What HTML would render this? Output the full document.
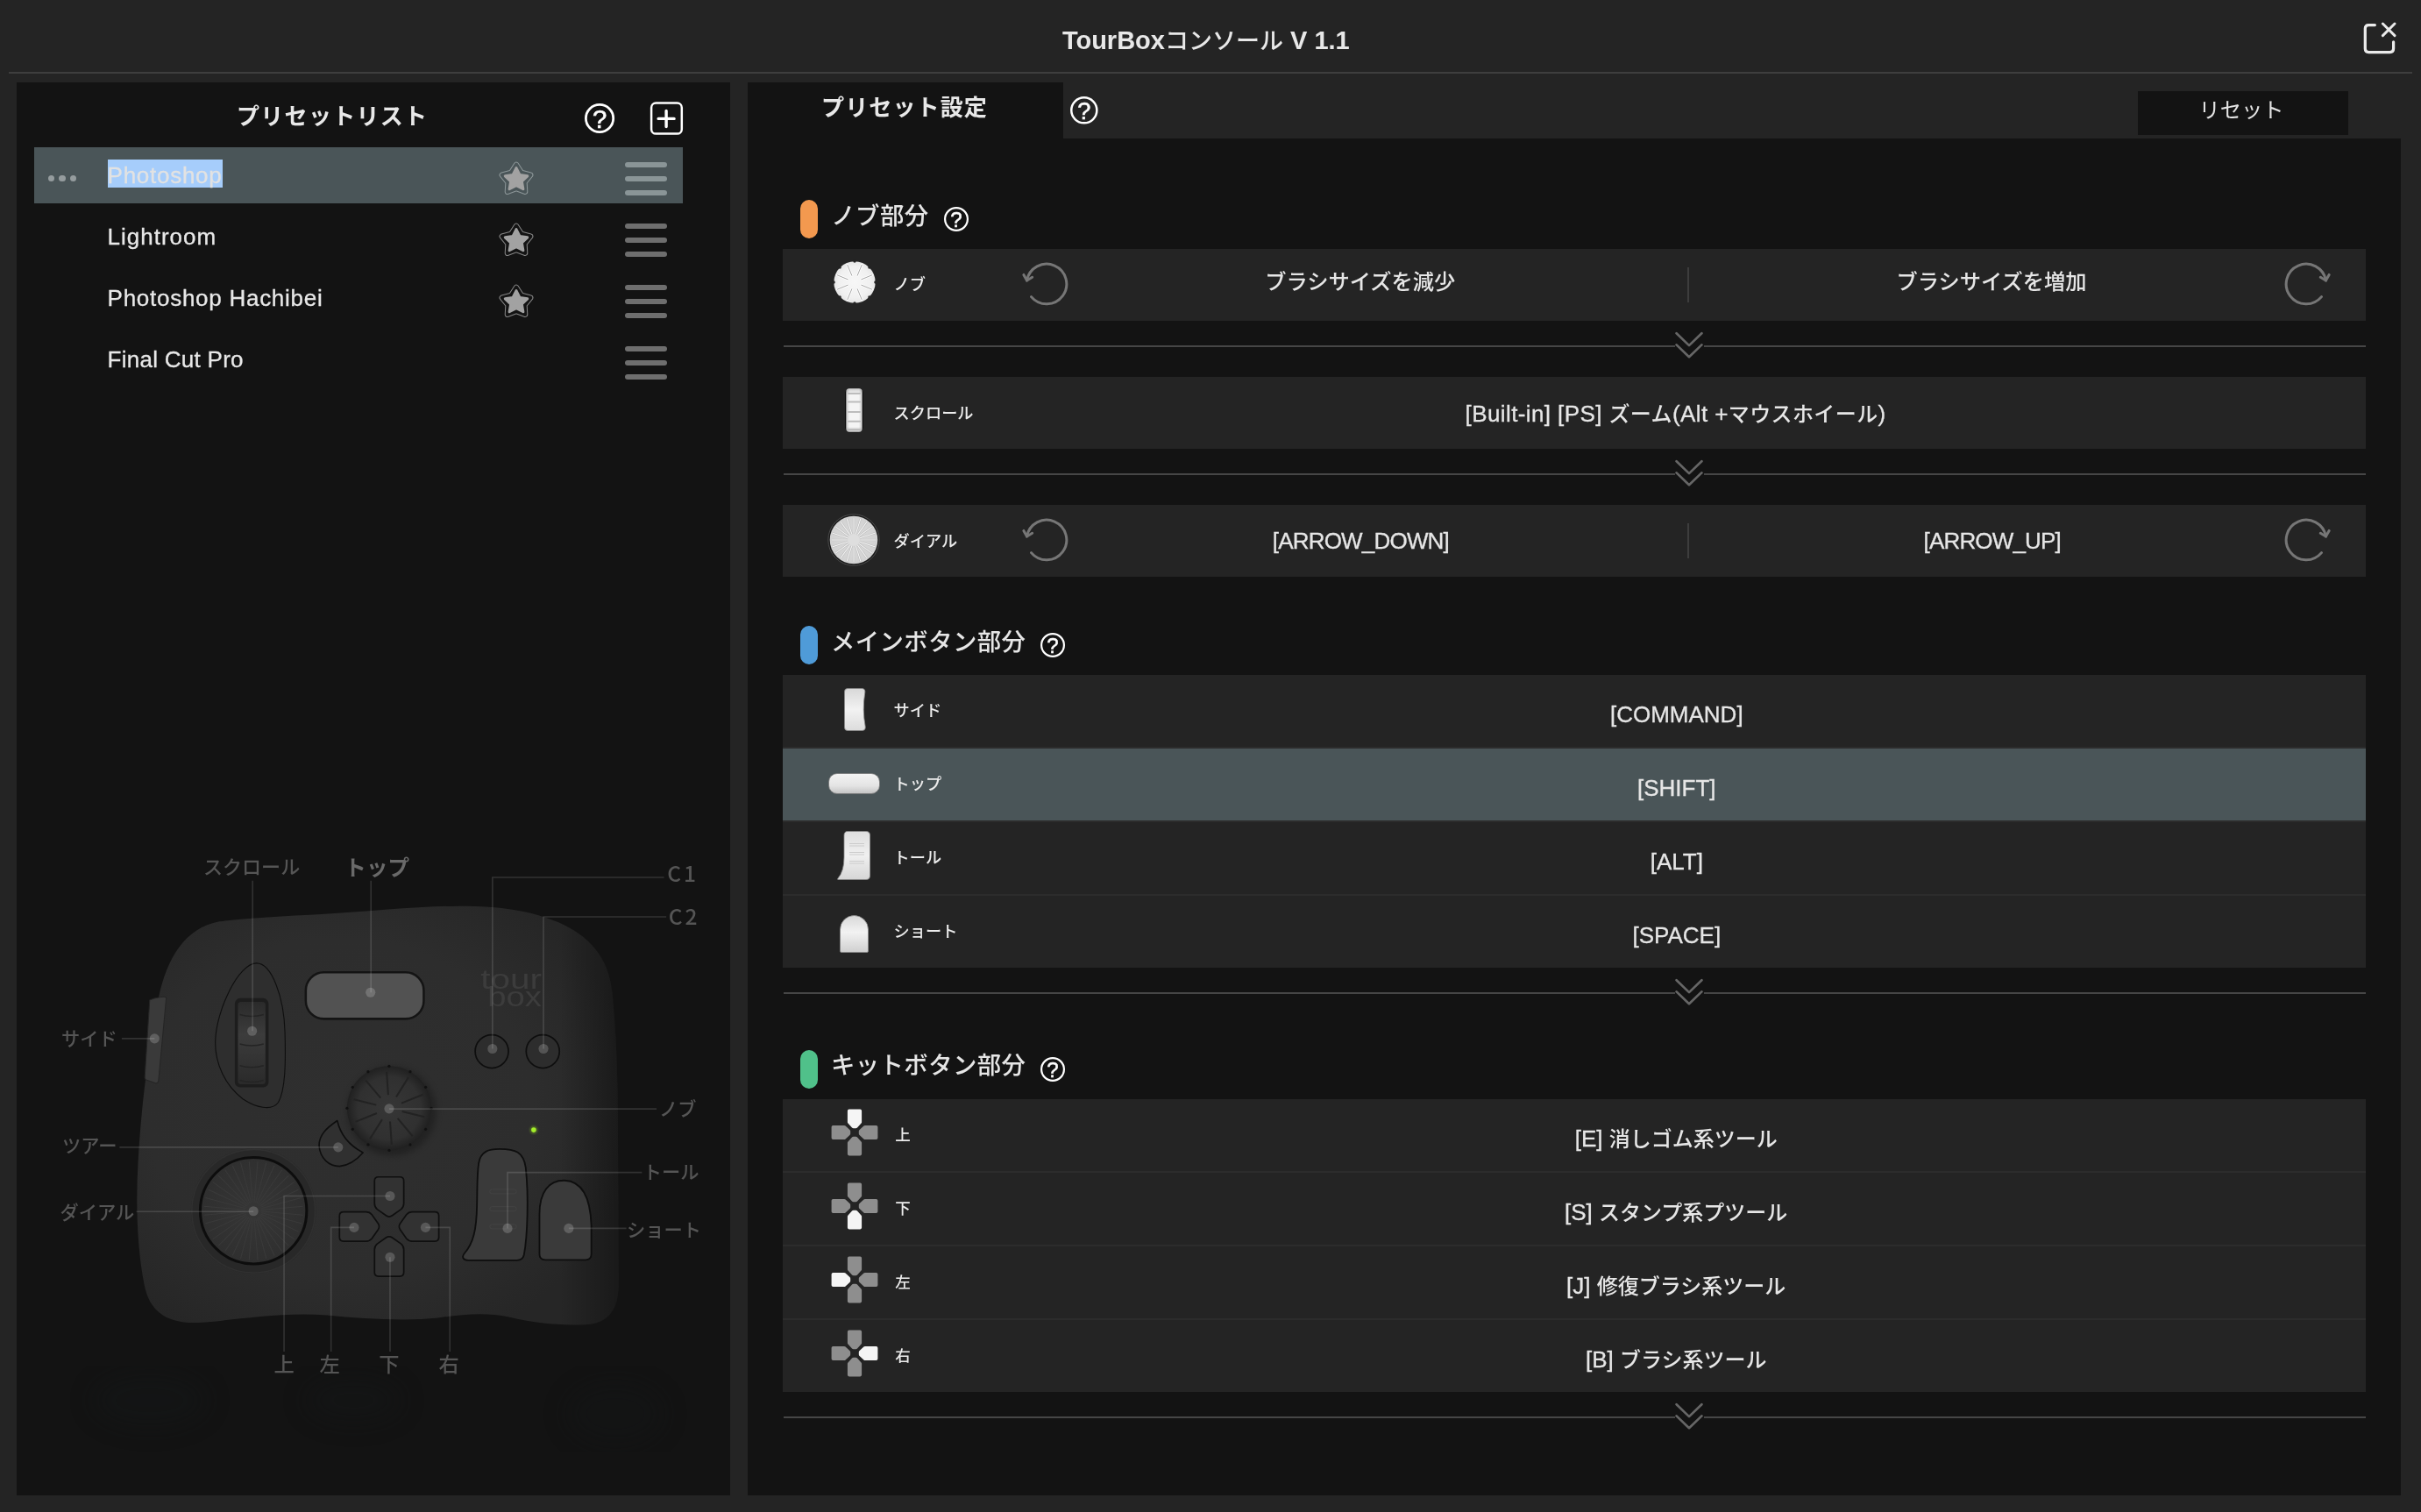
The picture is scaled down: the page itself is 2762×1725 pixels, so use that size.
<!DOCTYPE html>
<html lang="ja"><head><meta charset="utf-8"><title>TourBox Console</title><style>
*{margin:0;padding:0;box-sizing:border-box}
html,body{width:2762px;height:1725px;overflow:hidden;background:#242424}
body{position:relative;font-family:"Liberation Sans","Noto Sans CJK JP",sans-serif;color:#e6e6e6;-webkit-font-smoothing:antialiased}
.a{position:absolute}
.t{position:absolute;white-space:nowrap;line-height:1}
.t,.lab,.val,.sec{opacity:.999}
.c{transform:translateX(-50%)}
.j{font-weight:500;font-family:"Noto Sans CJK JP","Liberation Sans",sans-serif}
.panel{position:absolute;background:#131313}
.row{position:absolute;left:893px;width:1806px;height:82px;background:#242424}
.sep{position:absolute;left:893px;width:1806px;height:2px;background:#2c2c2c}
.sel{background:#4a5558}
.hl{position:absolute;left:894px;width:1805px;height:2px;background:#3b3b3b}
.lab{font-weight:500;position:absolute;white-space:nowrap;line-height:1;font-size:17.5px;color:#ececec;font-family:"Noto Sans CJK JP","Liberation Sans",sans-serif}
.val{position:absolute;white-space:nowrap;line-height:1;font-size:26px;color:#e6e6e6;transform:translateX(-50%)}
.val,.nm{-webkit-text-stroke:.3px currentColor}
.val .j{font-size:24px;-webkit-text-stroke:0 transparent}
.val.j{-webkit-text-stroke:0 transparent}
.sec{font-weight:500;position:absolute;white-space:nowrap;line-height:1;font-size:27px;color:#e6e6e6;font-family:"Noto Sans CJK JP","Liberation Sans",sans-serif}
.pill{position:absolute;left:913px;width:20px;height:44px;border-radius:10px}
svg{position:absolute;overflow:visible;opacity:.999}
</style></head><body>
<div class="t c" id="title" style="left:1375.8px;top:30.6px;font-size:29px;font-weight:bold;color:#e8e8e8">TourBox<span class="j" style="font-size:27px">コンソール</span> V 1.1</div>
<div class="a" style="left:10px;top:81.8px;width:2742px;height:2.4px;background:#3e3e3e"></div>
<svg style="left:2690px;top:20px" width="50" height="48" viewBox="2690 20 50 48" fill="none" stroke="#ebebeb" stroke-linecap="round" stroke-linejoin="round"><path stroke-width="3.2" d="M2709.4 28.6 H2702.3 Q2698.3 28.6 2698.3 32.6 V55.55 Q2698.3 59.55 2702.3 59.55 H2726.6 Q2730.6 59.55 2730.6 55.55 V47.8"/><path stroke-width="2.9" d="M2718.4 27 L2732 40.6 M2732 27 L2718.4 40.6"/></svg>
<div class="panel" style="left:19px;top:94px;width:814px;height:1612px"></div>
<div class="t j" id="lhead" style="left:270px;top:117.6px;font-size:26px;letter-spacing:1.3px;font-weight:bold;color:#e8e8e8">プリセットリスト</div>
<svg style="left:667.1px;top:118.0px" width="34.1" height="34.1" viewBox="0 0 34.1 34.1"><circle cx="17.05" cy="17.05" r="15.65" fill="none" stroke="#ffffff" stroke-width="2.8"/><text x="17.05" y="28.47" text-anchor="middle" font-family="Liberation Sans, sans-serif" font-size="29.3" fill="#ffffff" stroke="#ffffff" stroke-width="0.61">?</text></svg>
<svg style="left:738px;top:114px" width="44" height="44" viewBox="738 114 44 44" fill="none" stroke="#fff"><rect x="743.1" y="117.6" width="34.7" height="35" rx="5.2" stroke-width="2.5"/><path d="M760.1 126.5 V144.5 M751.1 135.4 H769.1" stroke-width="3.4" stroke-linecap="round"/></svg>
<div class="a sel" style="left:39px;top:168px;width:740px;height:64px"></div>
<div class="a" style="left:54.6px;top:200.1px;width:7.2px;height:7.2px;border-radius:50%;background:#959c9e"></div>
<div class="a" style="left:67.4px;top:200.1px;width:7.2px;height:7.2px;border-radius:50%;background:#959c9e"></div>
<div class="a" style="left:80.2px;top:200.1px;width:7.2px;height:7.2px;border-radius:50%;background:#959c9e"></div>
<div class="a" style="left:123px;top:182px;width:131px;height:32px;background:#a6cdfb"></div>
<div class="t nm" id="n0" style="left:122.6px;top:187.05px;font-size:26px;letter-spacing:0.73px;color:#e2e2e2">Photoshop</div>
<svg style="left:565.5px;top:182.1px" width="46" height="46" viewBox="565.5 182.1 46 46" stroke-linejoin="round"><path d="M588.50 188.05 L594.30 197.07 L604.67 199.80 L597.88 208.10 L598.49 218.80 L588.50 214.91 L578.51 218.80 L579.12 208.10 L572.33 199.80 L582.70 197.07Z" fill="#8c9698" stroke="#8c9698" stroke-width="6.6"/><path d="M588.50 188.05 L594.30 197.07 L604.67 199.80 L597.88 208.10 L598.49 218.80 L588.50 214.91 L578.51 218.80 L579.12 208.10 L572.33 199.80 L582.70 197.07Z" fill="#4a5558" stroke="#4a5558" stroke-width="4.5"/><path d="M588.50 191.65 L592.44 199.63 L601.24 200.91 L594.87 207.12 L596.38 215.89 L588.50 211.75 L580.62 215.89 L582.13 207.12 L575.76 200.91 L584.56 199.63Z" fill="#a2a2a2" stroke="#a2a2a2" stroke-width="3"/></svg>
<div class="a" style="left:713px;top:185.0px;width:48px;height:6px;border-radius:3px;background:#8a9597"></div><div class="a" style="left:713px;top:201.0px;width:48px;height:6px;border-radius:3px;background:#8a9597"></div><div class="a" style="left:713px;top:217.0px;width:48px;height:6px;border-radius:3px;background:#8a9597"></div>
<div class="t nm" id="n1" style="left:122.6px;top:257.05px;font-size:26px;letter-spacing:0.99px;color:#e8e8e8">Lightroom</div>
<svg style="left:565.5px;top:252.1px" width="46" height="46" viewBox="565.5 252.1 46 46" stroke-linejoin="round"><path d="M588.50 258.05 L594.30 267.07 L604.67 269.80 L597.88 278.10 L598.49 288.80 L588.50 284.91 L578.51 288.80 L579.12 278.10 L572.33 269.80 L582.70 267.07Z" fill="#858585" stroke="#858585" stroke-width="6.6"/><path d="M588.50 258.05 L594.30 267.07 L604.67 269.80 L597.88 278.10 L598.49 288.80 L588.50 284.91 L578.51 288.80 L579.12 278.10 L572.33 269.80 L582.70 267.07Z" fill="#131313" stroke="#131313" stroke-width="4.5"/><path d="M588.50 261.65 L592.44 269.63 L601.24 270.91 L594.87 277.12 L596.38 285.89 L588.50 281.75 L580.62 285.89 L582.13 277.12 L575.76 270.91 L584.56 269.63Z" fill="#a2a2a2" stroke="#a2a2a2" stroke-width="3"/></svg>
<div class="a" style="left:713px;top:255.0px;width:48px;height:6px;border-radius:3px;background:#6e6e6e"></div><div class="a" style="left:713px;top:271.0px;width:48px;height:6px;border-radius:3px;background:#6e6e6e"></div><div class="a" style="left:713px;top:287.0px;width:48px;height:6px;border-radius:3px;background:#6e6e6e"></div>
<div class="t nm" id="n2" style="left:122.6px;top:327.05px;font-size:26px;letter-spacing:0.73px;color:#e8e8e8">Photoshop Hachibei</div>
<svg style="left:565.5px;top:322.1px" width="46" height="46" viewBox="565.5 322.1 46 46" stroke-linejoin="round"><path d="M588.50 328.05 L594.30 337.07 L604.67 339.80 L597.88 348.10 L598.49 358.80 L588.50 354.91 L578.51 358.80 L579.12 348.10 L572.33 339.80 L582.70 337.07Z" fill="#858585" stroke="#858585" stroke-width="6.6"/><path d="M588.50 328.05 L594.30 337.07 L604.67 339.80 L597.88 348.10 L598.49 358.80 L588.50 354.91 L578.51 358.80 L579.12 348.10 L572.33 339.80 L582.70 337.07Z" fill="#131313" stroke="#131313" stroke-width="4.5"/><path d="M588.50 331.65 L592.44 339.63 L601.24 340.91 L594.87 347.12 L596.38 355.89 L588.50 351.75 L580.62 355.89 L582.13 347.12 L575.76 340.91 L584.56 339.63Z" fill="#a2a2a2" stroke="#a2a2a2" stroke-width="3"/></svg>
<div class="a" style="left:713px;top:325.0px;width:48px;height:6px;border-radius:3px;background:#6e6e6e"></div><div class="a" style="left:713px;top:341.0px;width:48px;height:6px;border-radius:3px;background:#6e6e6e"></div><div class="a" style="left:713px;top:357.0px;width:48px;height:6px;border-radius:3px;background:#6e6e6e"></div>
<div class="t nm" id="n3" style="left:122.6px;top:397.05px;font-size:26px;letter-spacing:0.27px;color:#e8e8e8">Final Cut Pro</div>
<div class="a" style="left:713px;top:395.0px;width:48px;height:6px;border-radius:3px;background:#6e6e6e"></div><div class="a" style="left:713px;top:411.0px;width:48px;height:6px;border-radius:3px;background:#6e6e6e"></div><div class="a" style="left:713px;top:427.0px;width:48px;height:6px;border-radius:3px;background:#6e6e6e"></div>
<div class="panel" style="left:853px;top:94px;width:360px;height:70px"></div>
<div class="panel" style="left:853px;top:158px;width:1886px;height:1548px"></div>
<div class="t j" id="rhead" style="left:937px;top:108.2px;font-size:26.1px;letter-spacing:1.05px;font-weight:bold;color:#e8e8e8">プリセット設定</div>
<svg style="left:1221.2px;top:110.2px" width="31.6" height="31.6" viewBox="0 0 31.6 31.6"><circle cx="15.8" cy="15.8" r="14.55" fill="none" stroke="#ffffff" stroke-width="2.5"/><text x="15.8" y="26.39" text-anchor="middle" font-family="Liberation Sans, sans-serif" font-size="27.2" fill="#ffffff" stroke="#ffffff" stroke-width="0.57">?</text></svg>
<div class="a" style="left:2439px;top:104px;width:240px;height:50px;background:#131313"></div>
<div class="t c j" id="reset" style="left:2557px;top:112px;font-size:24.3px;font-weight:400;color:#e4e4e4">リセット</div>
<div class="pill" style="top:228px;background:#f3994f"></div>
<div class="sec" id="s1" style="left:948.3px;top:231px;font-size:27.4px;letter-spacing:0.4px">ノブ部分</div>
<svg style="left:1077.0px;top:236.0px" width="28" height="28" viewBox="0 0 28 28"><circle cx="14.0" cy="14.0" r="12.90" fill="none" stroke="#ffffff" stroke-width="2.2"/><text x="14.0" y="23.38" text-anchor="middle" font-family="Liberation Sans, sans-serif" font-size="24.1" fill="#ffffff" stroke="#ffffff" stroke-width="0.50">?</text></svg>
<div class="row" style="top:284px"></div>
<div class="row" style="top:430px"></div>
<div class="row" style="top:576px"></div>
<div class="a" style="left:894px;top:393.9px;width:1017.3px;height:2.2px;background:#464646"></div><div class="a" style="left:1943.8px;top:393.9px;width:755.2px;height:2.2px;background:#464646"></div><svg style="left:1906.9px;top:375px" width="40" height="40" viewBox="1906.9 375 40 40" fill="none" stroke="#666666" stroke-width="2.7" stroke-linecap="round" stroke-linejoin="round"><path d="M1912.5 380.3 L1926.9 394.1 L1941.3 380.3"/><path d="M1912.5 393.4 L1926.9 407.2 L1941.3 393.4"/></svg>
<div class="a" style="left:894px;top:539.9px;width:1017.3px;height:2.2px;background:#464646"></div><div class="a" style="left:1943.8px;top:539.9px;width:755.2px;height:2.2px;background:#464646"></div><svg style="left:1906.9px;top:521px" width="40" height="40" viewBox="1906.9 521 40 40" fill="none" stroke="#666666" stroke-width="2.7" stroke-linecap="round" stroke-linejoin="round"><path d="M1912.5 526.3 L1926.9 540.1 L1941.3 526.3"/><path d="M1912.5 539.4 L1926.9 553.2 L1941.3 539.4"/></svg>
<svg style="left:948.8px;top:295.7px" width="52" height="52" viewBox="-26 -26 52 52"><defs><radialGradient id="kg"><stop offset="0" stop-color="#f7f7f7"/><stop offset="0.75" stop-color="#f0f0f0"/><stop offset="1" stop-color="#e6e6e6"/></radialGradient></defs><circle r="23.7" fill="url(#kg)"/><circle cx="23.90" cy="0.00" r="1.7" fill="#242424"/><circle cx="16.90" cy="16.90" r="1.7" fill="#242424"/><circle cx="0.00" cy="23.90" r="1.7" fill="#242424"/><circle cx="-16.90" cy="16.90" r="1.7" fill="#242424"/><circle cx="-23.90" cy="0.00" r="1.7" fill="#242424"/><circle cx="-16.90" cy="-16.90" r="1.7" fill="#242424"/><circle cx="-0.00" cy="-23.90" r="1.7" fill="#242424"/><circle cx="16.90" cy="-16.90" r="1.7" fill="#242424"/><line x1="7.76" y1="3.21" x2="19.59" y2="8.11" stroke="#ffffff" stroke-width="2.6" stroke-linecap="round"/><line x1="7.76" y1="3.21" x2="19.59" y2="8.11" stroke="#a6a6a6" stroke-width="1" stroke-linecap="round"/><line x1="3.21" y1="7.76" x2="8.11" y2="19.59" stroke="#ffffff" stroke-width="2.6" stroke-linecap="round"/><line x1="3.21" y1="7.76" x2="8.11" y2="19.59" stroke="#a6a6a6" stroke-width="1" stroke-linecap="round"/><line x1="-3.21" y1="7.76" x2="-8.11" y2="19.59" stroke="#ffffff" stroke-width="2.6" stroke-linecap="round"/><line x1="-3.21" y1="7.76" x2="-8.11" y2="19.59" stroke="#a6a6a6" stroke-width="1" stroke-linecap="round"/><line x1="-7.76" y1="3.21" x2="-19.59" y2="8.11" stroke="#ffffff" stroke-width="2.6" stroke-linecap="round"/><line x1="-7.76" y1="3.21" x2="-19.59" y2="8.11" stroke="#a6a6a6" stroke-width="1" stroke-linecap="round"/><line x1="-7.76" y1="-3.21" x2="-19.59" y2="-8.11" stroke="#ffffff" stroke-width="2.6" stroke-linecap="round"/><line x1="-7.76" y1="-3.21" x2="-19.59" y2="-8.11" stroke="#a6a6a6" stroke-width="1" stroke-linecap="round"/><line x1="-3.21" y1="-7.76" x2="-8.11" y2="-19.59" stroke="#ffffff" stroke-width="2.6" stroke-linecap="round"/><line x1="-3.21" y1="-7.76" x2="-8.11" y2="-19.59" stroke="#a6a6a6" stroke-width="1" stroke-linecap="round"/><line x1="3.21" y1="-7.76" x2="8.11" y2="-19.59" stroke="#ffffff" stroke-width="2.6" stroke-linecap="round"/><line x1="3.21" y1="-7.76" x2="8.11" y2="-19.59" stroke="#a6a6a6" stroke-width="1" stroke-linecap="round"/><line x1="7.76" y1="-3.21" x2="19.59" y2="-8.11" stroke="#ffffff" stroke-width="2.6" stroke-linecap="round"/><line x1="7.76" y1="-3.21" x2="19.59" y2="-8.11" stroke="#a6a6a6" stroke-width="1" stroke-linecap="round"/></svg>
<div class="lab" id="L1" style="left:1019.6px;top:313.8px;font-size:18.2px">ノブ</div>
<svg style="left:1164.3px;top:294.1px" width="60" height="60" viewBox="1164.3 294.1 60 60" fill="none" stroke="#767676" stroke-width="3" stroke-linecap="round" stroke-linejoin="round"><g><path d="M1171.85 320.14 A22.8 22.8 0 1 1 1176.83 338.76"/><path d="M1168.15 313.54 L1171.85 320.14 L1177.95 316.44"/></g></svg>
<svg style="left:2600.9px;top:294.0px" width="60" height="60" viewBox="2600.9 294.0 60 60" fill="none" stroke="#767676" stroke-width="3" stroke-linecap="round" stroke-linejoin="round"><g transform="translate(5261.80 0) scale(-1 1)"><path d="M2608.45 320.04 A22.8 22.8 0 1 1 2613.43 338.66"/><path d="M2604.75 313.44 L2608.45 320.04 L2614.55 316.34"/></g></svg>
<div class="a" style="left:1925px;top:305px;width:2px;height:40px;background:#3d3d3d"></div>
<div class="val j" id="v1" style="left:1551.7px;top:307.7px;font-size:24.26px">ブラシサイズを減少</div>
<div class="val j" id="v2" style="left:2272px;top:307.7px;font-size:24.26px">ブラシサイズを増加</div>
<svg style="left:964.0px;top:442.6px" width="21" height="50" viewBox="0 0 21 50"><defs><linearGradient id="sg" x1="0" x2="1" y1="0" y2="0"><stop offset="0" stop-color="#c4c4c4"/><stop offset="0.2" stop-color="#f4f4f4"/><stop offset="0.8" stop-color="#f4f4f4"/><stop offset="1" stop-color="#c4c4c4"/></linearGradient><linearGradient id="sg2" x1="0" x2="0" y1="0" y2="1"><stop offset="0" stop-color="#000" stop-opacity="0.16"/><stop offset="0.12" stop-color="#000" stop-opacity="0"/><stop offset="0.88" stop-color="#000" stop-opacity="0"/><stop offset="1" stop-color="#000" stop-opacity="0.2"/></linearGradient></defs><rect x="0" y="1.2" width="21" height="47.6" rx="4.5" fill="#0b0b0b"/><rect x="1.3" y="0.3" width="18.4" height="49.4" rx="3.6" fill="url(#sg)"/><rect x="1.3" y="0.3" width="18.4" height="49.4" rx="3.6" fill="url(#sg2)"/><rect x="3" y="5.0" width="15" height="1.9" rx="0.95" fill="#bcbcbc"/><rect x="3" y="14.6" width="15" height="1.9" rx="0.95" fill="#bcbcbc"/><rect x="3" y="26.0" width="15" height="1.9" rx="0.95" fill="#bcbcbc"/><rect x="3" y="36.8" width="15" height="1.9" rx="0.95" fill="#bcbcbc"/><rect x="3" y="46" width="15" height="1.9" rx="0.95" fill="#bcbcbc"/></svg>
<div class="lab" id="L2" style="left:1019.6px;top:460.8px;font-size:18.2px">スクロール</div>
<div class="val" id="v3" style="left:1911.6px;top:459px;letter-spacing:0.4px">[Built-in] [PS] <span class="j">ズーム</span>(Alt +<span class="j">マウスホイール</span>)</div>
<svg style="left:943.4px;top:585.1px" width="62" height="62" viewBox="-31 -31 62 62"><defs><radialGradient id="dg"><stop offset="0" stop-color="#dcdcdc"/><stop offset="1" stop-color="#d2d2d2"/></radialGradient></defs><circle r="29.2" fill="#1a1a1a" stroke="#4c4c4c" stroke-width="1"/><circle r="27.3" fill="url(#dg)"/><line x1="0.00" y1="7.50" x2="0.00" y2="25.30" stroke="#b9b9b9" stroke-width="2.2"/><line x1="0.00" y1="7.50" x2="0.00" y2="25.30" stroke="#f6f6f6" stroke-width="1.1"/><line x1="-2.32" y1="7.13" x2="-7.82" y2="24.06" stroke="#b9b9b9" stroke-width="2.2"/><line x1="-2.32" y1="7.13" x2="-7.82" y2="24.06" stroke="#f6f6f6" stroke-width="1.1"/><line x1="-4.41" y1="6.07" x2="-14.87" y2="20.47" stroke="#b9b9b9" stroke-width="2.2"/><line x1="-4.41" y1="6.07" x2="-14.87" y2="20.47" stroke="#f6f6f6" stroke-width="1.1"/><line x1="-6.07" y1="4.41" x2="-20.47" y2="14.87" stroke="#b9b9b9" stroke-width="2.2"/><line x1="-6.07" y1="4.41" x2="-20.47" y2="14.87" stroke="#f6f6f6" stroke-width="1.1"/><line x1="-7.13" y1="2.32" x2="-24.06" y2="7.82" stroke="#b9b9b9" stroke-width="2.2"/><line x1="-7.13" y1="2.32" x2="-24.06" y2="7.82" stroke="#f6f6f6" stroke-width="1.1"/><line x1="-7.50" y1="0.00" x2="-25.30" y2="0.00" stroke="#b9b9b9" stroke-width="2.2"/><line x1="-7.50" y1="0.00" x2="-25.30" y2="0.00" stroke="#f6f6f6" stroke-width="1.1"/><line x1="-7.13" y1="-2.32" x2="-24.06" y2="-7.82" stroke="#b9b9b9" stroke-width="2.2"/><line x1="-7.13" y1="-2.32" x2="-24.06" y2="-7.82" stroke="#f6f6f6" stroke-width="1.1"/><line x1="-6.07" y1="-4.41" x2="-20.47" y2="-14.87" stroke="#b9b9b9" stroke-width="2.2"/><line x1="-6.07" y1="-4.41" x2="-20.47" y2="-14.87" stroke="#f6f6f6" stroke-width="1.1"/><line x1="-4.41" y1="-6.07" x2="-14.87" y2="-20.47" stroke="#b9b9b9" stroke-width="2.2"/><line x1="-4.41" y1="-6.07" x2="-14.87" y2="-20.47" stroke="#f6f6f6" stroke-width="1.1"/><line x1="-2.32" y1="-7.13" x2="-7.82" y2="-24.06" stroke="#b9b9b9" stroke-width="2.2"/><line x1="-2.32" y1="-7.13" x2="-7.82" y2="-24.06" stroke="#f6f6f6" stroke-width="1.1"/><line x1="-0.00" y1="-7.50" x2="-0.00" y2="-25.30" stroke="#b9b9b9" stroke-width="2.2"/><line x1="-0.00" y1="-7.50" x2="-0.00" y2="-25.30" stroke="#f6f6f6" stroke-width="1.1"/><line x1="2.32" y1="-7.13" x2="7.82" y2="-24.06" stroke="#b9b9b9" stroke-width="2.2"/><line x1="2.32" y1="-7.13" x2="7.82" y2="-24.06" stroke="#f6f6f6" stroke-width="1.1"/><line x1="4.41" y1="-6.07" x2="14.87" y2="-20.47" stroke="#b9b9b9" stroke-width="2.2"/><line x1="4.41" y1="-6.07" x2="14.87" y2="-20.47" stroke="#f6f6f6" stroke-width="1.1"/><line x1="6.07" y1="-4.41" x2="20.47" y2="-14.87" stroke="#b9b9b9" stroke-width="2.2"/><line x1="6.07" y1="-4.41" x2="20.47" y2="-14.87" stroke="#f6f6f6" stroke-width="1.1"/><line x1="7.13" y1="-2.32" x2="24.06" y2="-7.82" stroke="#b9b9b9" stroke-width="2.2"/><line x1="7.13" y1="-2.32" x2="24.06" y2="-7.82" stroke="#f6f6f6" stroke-width="1.1"/><line x1="7.50" y1="-0.00" x2="25.30" y2="-0.00" stroke="#b9b9b9" stroke-width="2.2"/><line x1="7.50" y1="-0.00" x2="25.30" y2="-0.00" stroke="#f6f6f6" stroke-width="1.1"/><line x1="7.13" y1="2.32" x2="24.06" y2="7.82" stroke="#b9b9b9" stroke-width="2.2"/><line x1="7.13" y1="2.32" x2="24.06" y2="7.82" stroke="#f6f6f6" stroke-width="1.1"/><line x1="6.07" y1="4.41" x2="20.47" y2="14.87" stroke="#b9b9b9" stroke-width="2.2"/><line x1="6.07" y1="4.41" x2="20.47" y2="14.87" stroke="#f6f6f6" stroke-width="1.1"/><line x1="4.41" y1="6.07" x2="14.87" y2="20.47" stroke="#b9b9b9" stroke-width="2.2"/><line x1="4.41" y1="6.07" x2="14.87" y2="20.47" stroke="#f6f6f6" stroke-width="1.1"/><line x1="2.32" y1="7.13" x2="7.82" y2="24.06" stroke="#b9b9b9" stroke-width="2.2"/><line x1="2.32" y1="7.13" x2="7.82" y2="24.06" stroke="#f6f6f6" stroke-width="1.1"/><circle r="6.6" fill="#dedede"/></svg>
<div class="lab" id="L3" style="left:1019.6px;top:606.8px;font-size:18.2px">ダイアル</div>
<svg style="left:1164.3px;top:586.1px" width="60" height="60" viewBox="1164.3 586.1 60 60" fill="none" stroke="#767676" stroke-width="3" stroke-linecap="round" stroke-linejoin="round"><g><path d="M1171.85 612.14 A22.8 22.8 0 1 1 1176.83 630.76"/><path d="M1168.15 605.54 L1171.85 612.14 L1177.95 608.44"/></g></svg>
<svg style="left:2600.9px;top:586.0px" width="60" height="60" viewBox="2600.9 586.0 60 60" fill="none" stroke="#767676" stroke-width="3" stroke-linecap="round" stroke-linejoin="round"><g transform="translate(5261.80 0) scale(-1 1)"><path d="M2608.45 612.04 A22.8 22.8 0 1 1 2613.43 630.66"/><path d="M2604.75 605.44 L2608.45 612.04 L2614.55 608.34"/></g></svg>
<div class="a" style="left:1925px;top:597px;width:2px;height:40px;background:#3d3d3d"></div>
<div class="val" id="v4" style="left:1552.4px;top:604.3px;letter-spacing:-0.8px">[ARROW_DOWN]</div>
<div class="val" id="v5" style="left:2272.7px;top:604.3px;letter-spacing:-0.85px">[ARROW_UP]</div>
<div class="pill" style="top:714px;background:#4f9bd8"></div>
<div class="sec" id="s2" style="left:948px;top:716.6px;font-size:27.4px;letter-spacing:0.4px">メインボタン部分</div>
<svg style="left:1187.0px;top:722.0px" width="28" height="28" viewBox="0 0 28 28"><circle cx="14.0" cy="14.0" r="12.90" fill="none" stroke="#ffffff" stroke-width="2.2"/><text x="14.0" y="23.38" text-anchor="middle" font-family="Liberation Sans, sans-serif" font-size="24.1" fill="#ffffff" stroke="#ffffff" stroke-width="0.50">?</text></svg>
<div class="row" style="top:770px"></div>
<div class="sep" style="top:852px"></div>
<svg style="left:962.5px;top:785.1px" width="25" height="49" viewBox="0 0 25 49"><defs><linearGradient id="sdg" x1="0" x2="0" y1="0" y2="1"><stop offset="0" stop-color="#d8d8d8"/><stop offset="0.5" stop-color="#f2f2f2"/><stop offset="1" stop-color="#dcdcdc"/></linearGradient></defs><path d="M4 0.5 H20 Q24.5 0.5 23.8 5 Q20.5 24.5 24.2 44 Q24.8 48.5 20 48.5 H4 Q0.5 48.5 0.5 45 V4 Q0.5 0.5 4 0.5Z" fill="url(#sdg)" stroke="#8a8a8a" stroke-width="0.8"/></svg>
<div class="lab" id="L4" style="left:1019.6px;top:800.3px;font-size:18.2px">サイド</div>
<div class="val" id="m0" style="left:1912.8px;top:802.2px">[COMMAND]</div>
<div class="row sel" style="top:854px"></div>
<div class="sep" style="top:936px"></div>
<svg style="left:945.2px;top:881.5px" width="59" height="24" viewBox="0 0 59 24"><defs><linearGradient id="tg" x1="0" x2="0" y1="0" y2="1"><stop offset="0" stop-color="#f4f4f4"/><stop offset="0.6" stop-color="#e4e4e4"/><stop offset="1" stop-color="#c4c4c4"/></linearGradient></defs><rect x="0.5" y="0.5" width="58" height="23" rx="9.5" fill="url(#tg)" stroke="#777" stroke-width="0.8"/></svg>
<div class="lab" id="L5" style="left:1019.6px;top:884.3px;font-size:18.2px">トップ</div>
<div class="val" id="m1" style="left:1912.8px;top:886.2px">[SHIFT]</div>
<div class="row" style="top:938px"></div>
<div class="sep" style="top:1020px"></div>
<svg style="left:955.2px;top:948px" width="38" height="56" viewBox="0 0 38 56"><defs><linearGradient id="tlg" x1="0" x2="0" y1="0" y2="1"><stop offset="0" stop-color="#dedede"/><stop offset="0.5" stop-color="#f0f0f0"/><stop offset="1" stop-color="#d6d6d6"/></linearGradient></defs><path d="M12 0.5 H33 Q37.5 0.5 37.5 5 V51 Q37.5 55.5 33 55.5 H1 Q0 55.5 1 54 Q8 46 8 30 V5 Q8 0.5 12 0.5Z" fill="url(#tlg)" stroke="#8a8a8a" stroke-width="0.8"/><path d="M14 14.5 H31 M14 17.0 H31" stroke="#c4c4c4" stroke-width="0.8"/><path d="M14 24.5 H31 M14 27.0 H31" stroke="#c4c4c4" stroke-width="0.8"/><path d="M14 34.5 H31 M14 37.0 H31" stroke="#c4c4c4" stroke-width="0.8"/></svg>
<div class="lab" id="L6" style="left:1019.6px;top:968.3px;font-size:18.2px">トール</div>
<div class="val" id="m2" style="left:1912.8px;top:970.2px">[ALT]</div>
<div class="row" style="top:1022px"></div>
<svg style="left:957.8px;top:1044.1px" width="33" height="43" viewBox="0 0 33 43"><defs><linearGradient id="shg" x1="0" x2="0" y1="0" y2="1"><stop offset="0" stop-color="#d8d8d8"/><stop offset="0.45" stop-color="#f2f2f2"/><stop offset="1" stop-color="#cfcfcf"/></linearGradient></defs><path d="M0.5 41 V16.5 A16 16 0 0 1 32.5 16.5 V41 Q32.5 42.5 31 42.5 H2 Q0.5 42.5 0.5 41Z" fill="url(#shg)" stroke="#8a8a8a" stroke-width="0.8"/></svg>
<div class="lab" id="L7" style="left:1019.6px;top:1052.3px;font-size:18.2px">ショート</div>
<div class="val" id="m3" style="left:1912.8px;top:1054.2px">[SPACE]</div>
<div class="a" style="left:894px;top:1131.9px;width:1017.3px;height:2.2px;background:#464646"></div><div class="a" style="left:1943.8px;top:1131.9px;width:755.2px;height:2.2px;background:#464646"></div><svg style="left:1906.9px;top:1113px" width="40" height="40" viewBox="1906.9 1113 40 40" fill="none" stroke="#666666" stroke-width="2.7" stroke-linecap="round" stroke-linejoin="round"><path d="M1912.5 1118.3 L1926.9 1132.1 L1941.3 1118.3"/><path d="M1912.5 1131.4 L1926.9 1145.2 L1941.3 1131.4"/></svg>
<div class="pill" style="top:1198px;background:#50c18a"></div>
<div class="sec" id="s3" style="left:948px;top:1200.3px;font-size:27.4px;letter-spacing:0.4px">キットボタン部分</div>
<svg style="left:1187.0px;top:1206.0px" width="28" height="28" viewBox="0 0 28 28"><circle cx="14.0" cy="14.0" r="12.90" fill="none" stroke="#ffffff" stroke-width="2.2"/><text x="14.0" y="23.38" text-anchor="middle" font-family="Liberation Sans, sans-serif" font-size="24.1" fill="#ffffff" stroke="#ffffff" stroke-width="0.50">?</text></svg>
<div class="row" style="top:1254px"></div>
<div class="sep" style="top:1336px"></div>
<svg style="left:947.7px;top:1265.1px" width="54" height="54" viewBox="-27 -27 54 54"><path d="M-6.3 -26.4 H6.3 Q8.1 -26.4 8.1 -24.6 V-11.8 Q8.1 -11 7.5 -10.4 L3 -5.6 Q2.3 -4.8 1.3 -4.8 H-1.3 Q-2.3 -4.8 -3 -5.6 L-7.5 -10.4 Q-8.1 -11 -8.1 -11.8 V-24.6 Q-8.1 -26.4 -6.3 -26.4Z" transform="rotate(0)" fill="#f5f5f5"/><path d="M-6.3 -26.4 H6.3 Q8.1 -26.4 8.1 -24.6 V-11.8 Q8.1 -11 7.5 -10.4 L3 -5.6 Q2.3 -4.8 1.3 -4.8 H-1.3 Q-2.3 -4.8 -3 -5.6 L-7.5 -10.4 Q-8.1 -11 -8.1 -11.8 V-24.6 Q-8.1 -26.4 -6.3 -26.4Z" transform="rotate(90)" fill="#8e8e8e"/><path d="M-6.3 -26.4 H6.3 Q8.1 -26.4 8.1 -24.6 V-11.8 Q8.1 -11 7.5 -10.4 L3 -5.6 Q2.3 -4.8 1.3 -4.8 H-1.3 Q-2.3 -4.8 -3 -5.6 L-7.5 -10.4 Q-8.1 -11 -8.1 -11.8 V-24.6 Q-8.1 -26.4 -6.3 -26.4Z" transform="rotate(180)" fill="#8e8e8e"/><path d="M-6.3 -26.4 H6.3 Q8.1 -26.4 8.1 -24.6 V-11.8 Q8.1 -11 7.5 -10.4 L3 -5.6 Q2.3 -4.8 1.3 -4.8 H-1.3 Q-2.3 -4.8 -3 -5.6 L-7.5 -10.4 Q-8.1 -11 -8.1 -11.8 V-24.6 Q-8.1 -26.4 -6.3 -26.4Z" transform="rotate(270)" fill="#8e8e8e"/></svg>
<div class="lab" id="L8" style="left:1021.2px;top:1284.6px;font-size:17.5px">上</div>
<div class="val" id="k0" style="left:1912.2px;top:1286.2px">[E] <span class="j">消しゴム系ツール</span></div>
<div class="row" style="top:1338px"></div>
<div class="sep" style="top:1420px"></div>
<svg style="left:947.7px;top:1349.1px" width="54" height="54" viewBox="-27 -27 54 54"><path d="M-6.3 -26.4 H6.3 Q8.1 -26.4 8.1 -24.6 V-11.8 Q8.1 -11 7.5 -10.4 L3 -5.6 Q2.3 -4.8 1.3 -4.8 H-1.3 Q-2.3 -4.8 -3 -5.6 L-7.5 -10.4 Q-8.1 -11 -8.1 -11.8 V-24.6 Q-8.1 -26.4 -6.3 -26.4Z" transform="rotate(0)" fill="#8e8e8e"/><path d="M-6.3 -26.4 H6.3 Q8.1 -26.4 8.1 -24.6 V-11.8 Q8.1 -11 7.5 -10.4 L3 -5.6 Q2.3 -4.8 1.3 -4.8 H-1.3 Q-2.3 -4.8 -3 -5.6 L-7.5 -10.4 Q-8.1 -11 -8.1 -11.8 V-24.6 Q-8.1 -26.4 -6.3 -26.4Z" transform="rotate(90)" fill="#8e8e8e"/><path d="M-6.3 -26.4 H6.3 Q8.1 -26.4 8.1 -24.6 V-11.8 Q8.1 -11 7.5 -10.4 L3 -5.6 Q2.3 -4.8 1.3 -4.8 H-1.3 Q-2.3 -4.8 -3 -5.6 L-7.5 -10.4 Q-8.1 -11 -8.1 -11.8 V-24.6 Q-8.1 -26.4 -6.3 -26.4Z" transform="rotate(180)" fill="#f5f5f5"/><path d="M-6.3 -26.4 H6.3 Q8.1 -26.4 8.1 -24.6 V-11.8 Q8.1 -11 7.5 -10.4 L3 -5.6 Q2.3 -4.8 1.3 -4.8 H-1.3 Q-2.3 -4.8 -3 -5.6 L-7.5 -10.4 Q-8.1 -11 -8.1 -11.8 V-24.6 Q-8.1 -26.4 -6.3 -26.4Z" transform="rotate(270)" fill="#8e8e8e"/></svg>
<div class="lab" id="L9" style="left:1021.2px;top:1368.6px;font-size:17.5px">下</div>
<div class="val" id="k1" style="left:1912.2px;top:1370.2px">[S] <span class="j">スタンプ系プツール</span></div>
<div class="row" style="top:1422px"></div>
<div class="sep" style="top:1504px"></div>
<svg style="left:947.7px;top:1433.1px" width="54" height="54" viewBox="-27 -27 54 54"><path d="M-6.3 -26.4 H6.3 Q8.1 -26.4 8.1 -24.6 V-11.8 Q8.1 -11 7.5 -10.4 L3 -5.6 Q2.3 -4.8 1.3 -4.8 H-1.3 Q-2.3 -4.8 -3 -5.6 L-7.5 -10.4 Q-8.1 -11 -8.1 -11.8 V-24.6 Q-8.1 -26.4 -6.3 -26.4Z" transform="rotate(0)" fill="#8e8e8e"/><path d="M-6.3 -26.4 H6.3 Q8.1 -26.4 8.1 -24.6 V-11.8 Q8.1 -11 7.5 -10.4 L3 -5.6 Q2.3 -4.8 1.3 -4.8 H-1.3 Q-2.3 -4.8 -3 -5.6 L-7.5 -10.4 Q-8.1 -11 -8.1 -11.8 V-24.6 Q-8.1 -26.4 -6.3 -26.4Z" transform="rotate(90)" fill="#8e8e8e"/><path d="M-6.3 -26.4 H6.3 Q8.1 -26.4 8.1 -24.6 V-11.8 Q8.1 -11 7.5 -10.4 L3 -5.6 Q2.3 -4.8 1.3 -4.8 H-1.3 Q-2.3 -4.8 -3 -5.6 L-7.5 -10.4 Q-8.1 -11 -8.1 -11.8 V-24.6 Q-8.1 -26.4 -6.3 -26.4Z" transform="rotate(180)" fill="#8e8e8e"/><path d="M-6.3 -26.4 H6.3 Q8.1 -26.4 8.1 -24.6 V-11.8 Q8.1 -11 7.5 -10.4 L3 -5.6 Q2.3 -4.8 1.3 -4.8 H-1.3 Q-2.3 -4.8 -3 -5.6 L-7.5 -10.4 Q-8.1 -11 -8.1 -11.8 V-24.6 Q-8.1 -26.4 -6.3 -26.4Z" transform="rotate(270)" fill="#f5f5f5"/></svg>
<div class="lab" id="L10" style="left:1021.2px;top:1452.6px;font-size:17.5px">左</div>
<div class="val" id="k2" style="left:1912.2px;top:1454.2px">[J] <span class="j">修復ブラシ系ツール</span></div>
<div class="row" style="top:1506px"></div>
<svg style="left:947.7px;top:1517.1px" width="54" height="54" viewBox="-27 -27 54 54"><path d="M-6.3 -26.4 H6.3 Q8.1 -26.4 8.1 -24.6 V-11.8 Q8.1 -11 7.5 -10.4 L3 -5.6 Q2.3 -4.8 1.3 -4.8 H-1.3 Q-2.3 -4.8 -3 -5.6 L-7.5 -10.4 Q-8.1 -11 -8.1 -11.8 V-24.6 Q-8.1 -26.4 -6.3 -26.4Z" transform="rotate(0)" fill="#8e8e8e"/><path d="M-6.3 -26.4 H6.3 Q8.1 -26.4 8.1 -24.6 V-11.8 Q8.1 -11 7.5 -10.4 L3 -5.6 Q2.3 -4.8 1.3 -4.8 H-1.3 Q-2.3 -4.8 -3 -5.6 L-7.5 -10.4 Q-8.1 -11 -8.1 -11.8 V-24.6 Q-8.1 -26.4 -6.3 -26.4Z" transform="rotate(90)" fill="#f5f5f5"/><path d="M-6.3 -26.4 H6.3 Q8.1 -26.4 8.1 -24.6 V-11.8 Q8.1 -11 7.5 -10.4 L3 -5.6 Q2.3 -4.8 1.3 -4.8 H-1.3 Q-2.3 -4.8 -3 -5.6 L-7.5 -10.4 Q-8.1 -11 -8.1 -11.8 V-24.6 Q-8.1 -26.4 -6.3 -26.4Z" transform="rotate(180)" fill="#8e8e8e"/><path d="M-6.3 -26.4 H6.3 Q8.1 -26.4 8.1 -24.6 V-11.8 Q8.1 -11 7.5 -10.4 L3 -5.6 Q2.3 -4.8 1.3 -4.8 H-1.3 Q-2.3 -4.8 -3 -5.6 L-7.5 -10.4 Q-8.1 -11 -8.1 -11.8 V-24.6 Q-8.1 -26.4 -6.3 -26.4Z" transform="rotate(270)" fill="#8e8e8e"/></svg>
<div class="lab" id="L11" style="left:1021.2px;top:1536.6px;font-size:17.5px">右</div>
<div class="val" id="k3" style="left:1912.2px;top:1538.2px">[B] <span class="j">ブラシ系ツール</span></div>
<div class="a" style="left:894px;top:1615.9px;width:1017.3px;height:2.2px;background:#464646"></div><div class="a" style="left:1943.8px;top:1615.9px;width:755.2px;height:2.2px;background:#464646"></div><svg style="left:1906.9px;top:1597px" width="40" height="40" viewBox="1906.9 1597 40 40" fill="none" stroke="#666666" stroke-width="2.7" stroke-linecap="round" stroke-linejoin="round"><path d="M1912.5 1602.3 L1926.9 1616.1 L1941.3 1602.3"/><path d="M1912.5 1615.4 L1926.9 1629.2 L1941.3 1615.4"/></svg>
<svg style="left:19px;top:940px;filter:blur(0.65px)" width="814" height="765" viewBox="0 0 1609 1512">
<defs>
<radialGradient id="bodyg" cx="0.42" cy="0.48" r="0.62"><stop offset="0" stop-color="#2f2f2f"/><stop offset="0.65" stop-color="#2d2d2d"/><stop offset="1" stop-color="#262626"/></radialGradient>
<linearGradient id="rsh" x1="0" x2="1" y1="0" y2="0"><stop offset="0" stop-color="#000" stop-opacity="0"/><stop offset="1" stop-color="#000" stop-opacity="0.34"/></linearGradient>
<linearGradient id="whg" x1="0" x2="0" y1="0" y2="1"><stop offset="0" stop-color="#2a2a2a"/><stop offset="0.4" stop-color="#3c3c3c"/><stop offset="1" stop-color="#2a2a2a"/></linearGradient>
<radialGradient id="kng"><stop offset="0" stop-color="#363636"/><stop offset="0.75" stop-color="#303030"/><stop offset="1" stop-color="#202020"/></radialGradient>
<radialGradient id="dlg"><stop offset="0" stop-color="#363636"/><stop offset="1" stop-color="#2f2f2f"/></radialGradient>
<filter id="soft" filterUnits="userSpaceOnUse" x="0" y="0" width="1609" height="1512"><feGaussianBlur stdDeviation="1.3"/></filter>
<filter id="b2" color-interpolation-filters="sRGB"><feGaussianBlur stdDeviation="2"/></filter>
<filter id="b6" color-interpolation-filters="sRGB"><feGaussianBlur stdDeviation="7"/></filter>
<filter id="b30" color-interpolation-filters="sRGB"><feGaussianBlur stdDeviation="28"/></filter>
</defs>
<g>
<g filter="url(#b30)" opacity="0.3"><ellipse cx="300" cy="1300" rx="130" ry="60" fill="#161b1c"/><ellipse cx="760" cy="1300" rx="110" ry="50" fill="#171a1b"/><ellipse cx="1350" cy="1330" rx="110" ry="70" fill="#16191a"/></g>
<clipPath id="bclip"><path d="M457 220 C520 212 600 208 695 203 C800 197 900 186 1000 185 C1090 185 1160 195 1222 222 C1290 252 1335 300 1343 380 C1352 470 1356 560 1356 700 L1357 1040 C1357 1095 1335 1127 1280 1129 C1220 1131 1170 1126 1110 1112 C1060 1101 1010 1105 950 1114 C880 1122 780 1116 700 1108 C600 1100 500 1118 420 1124 C340 1130 300 1100 288 1040 C272 960 268 860 274 760 C280 650 295 520 320 392 C340 300 380 235 457 220 Z"/></clipPath>
<path d="M457 220 C520 212 600 208 695 203 C800 197 900 186 1000 185 C1090 185 1160 195 1222 222 C1290 252 1335 300 1343 380 C1352 470 1356 560 1356 700 L1357 1040 C1357 1095 1335 1127 1280 1129 C1220 1131 1170 1126 1110 1112 C1060 1101 1010 1105 950 1114 C880 1122 780 1116 700 1108 C600 1100 500 1118 420 1124 C340 1130 300 1100 288 1040 C272 960 268 860 274 760 C280 650 295 520 320 392 C340 300 380 235 457 220 Z" fill="url(#bodyg)"/>
<rect x="1225" y="150" width="135" height="1000" fill="url(#rsh)" clip-path="url(#bclip)"/>
<path d="M300 397 Q318 390 334 390 Q338 390 337 396 L320 578 Q319 586 312 584 L292 577 Q288 575 289 570 Z" fill="#3a3a3a" stroke="#252525" stroke-width="2" stroke-linejoin="round"/>
<path d="M541 314 C575 314 603 390 605 470 C607 540 606 600 590 628 C575 648 540 640 510 620 C470 590 447 540 448 490 C450 420 500 314 541 314 Z" fill="#2e2e2e" stroke="#0f0f0f" stroke-width="2.2"/>
<rect x="492" y="393" width="76" height="201" rx="12" fill="#1d1d1d"/>
<rect x="499" y="401" width="62" height="186" rx="7" fill="url(#whg)"/>
<path d="M503 430 Q530 438 557 430" stroke="#242424" stroke-width="3" fill="none"/>
<path d="M503 496 Q530 504 557 496" stroke="#242424" stroke-width="3" fill="none"/>
<path d="M503 545 Q530 553 557 545" stroke="#242424" stroke-width="3" fill="none"/>
<path d="M503 578 Q530 586 557 578" stroke="#242424" stroke-width="3" fill="none"/>
<rect x="652" y="334.5" width="266" height="105" rx="41" fill="#525252" stroke="#141414" stroke-width="5"/>
<text x="1046" y="372" font-family="Liberation Sans, sans-serif" font-size="62" fill="#3c3c3c" textLength="138" lengthAdjust="spacingAndGlyphs">tour</text>
<text x="1062" y="412" font-family="Liberation Sans, sans-serif" font-size="62" fill="#3c3c3c" textLength="122" lengthAdjust="spacingAndGlyphs">box</text>
<circle cx="1071.5" cy="513" r="37.5" fill="#2d2d2d" stroke="#0e0e0e" stroke-width="3.4"/>
<circle cx="1186.5" cy="513" r="37.5" fill="#2d2d2d" stroke="#0e0e0e" stroke-width="3.4"/>
<circle cx="846" cy="648" r="100" fill="#1f1f1f" filter="url(#b6)" opacity="0.8"/>
<circle cx="840" cy="641" r="95" fill="url(#kng)"/>
<line x1="869.1" y1="648.3" x2="919.6" y2="660.8" stroke="#222222" stroke-width="4"/>
<line x1="859.3" y1="664.0" x2="892.7" y2="703.8" stroke="#222222" stroke-width="4"/>
<line x1="842.1" y1="670.9" x2="845.7" y2="722.8" stroke="#222222" stroke-width="4"/>
<line x1="824.1" y1="666.4" x2="796.5" y2="710.5" stroke="#222222" stroke-width="4"/>
<line x1="812.2" y1="652.2" x2="764.0" y2="671.7" stroke="#222222" stroke-width="4"/>
<line x1="810.9" y1="633.7" x2="760.4" y2="621.2" stroke="#222222" stroke-width="4"/>
<line x1="820.7" y1="618.0" x2="787.3" y2="578.2" stroke="#222222" stroke-width="4"/>
<line x1="837.9" y1="611.1" x2="834.3" y2="559.2" stroke="#222222" stroke-width="4"/>
<line x1="855.9" y1="615.6" x2="883.5" y2="571.5" stroke="#222222" stroke-width="4"/>
<line x1="867.8" y1="629.8" x2="916.0" y2="610.3" stroke="#222222" stroke-width="4"/>
<circle cx="935.0" cy="641.0" r="3.2" fill="#111"/>
<circle cx="922.3" cy="688.5" r="3.2" fill="#111"/>
<circle cx="887.5" cy="723.3" r="3.2" fill="#111"/>
<circle cx="840.0" cy="736.0" r="3.2" fill="#111"/>
<circle cx="792.5" cy="723.3" r="3.2" fill="#111"/>
<circle cx="757.7" cy="688.5" r="3.2" fill="#111"/>
<circle cx="745.0" cy="641.0" r="3.2" fill="#111"/>
<circle cx="757.7" cy="593.5" r="3.2" fill="#111"/>
<circle cx="792.5" cy="558.7" r="3.2" fill="#111"/>
<circle cx="840.0" cy="546.0" r="3.2" fill="#111"/>
<circle cx="887.5" cy="558.7" r="3.2" fill="#111"/>
<circle cx="922.3" cy="593.5" r="3.2" fill="#111"/>
<path d="M723 669 C700 685 682 700 682 725 C684 755 705 772 728 772 C750 770 768 756 781 741 C750 725 730 700 723 669 Z" fill="#303030" stroke="#0e0e0e" stroke-width="3.2" stroke-linejoin="round"/>
<circle cx="534" cy="873" r="141" fill="#282828"/>
<circle cx="534" cy="873" r="139" fill="none" stroke="#303030" stroke-width="3"/>
<circle cx="534" cy="872" r="120" fill="url(#dlg)" stroke="#0d0d0d" stroke-width="6"/>
<line x1="551.9" y1="873.6" x2="645.6" y2="881.8" stroke="#3a3a3a" stroke-width="2"/>
<line x1="551.4" y1="876.7" x2="642.2" y2="901.0" stroke="#3a3a3a" stroke-width="2"/>
<line x1="550.3" y1="879.6" x2="635.5" y2="919.3" stroke="#3a3a3a" stroke-width="2"/>
<line x1="548.7" y1="882.3" x2="625.7" y2="936.2" stroke="#3a3a3a" stroke-width="2"/>
<line x1="546.7" y1="884.7" x2="613.2" y2="951.2" stroke="#3a3a3a" stroke-width="2"/>
<line x1="544.3" y1="886.7" x2="598.2" y2="963.7" stroke="#3a3a3a" stroke-width="2"/>
<line x1="541.6" y1="888.3" x2="581.3" y2="973.5" stroke="#3a3a3a" stroke-width="2"/>
<line x1="538.7" y1="889.4" x2="563.0" y2="980.2" stroke="#3a3a3a" stroke-width="2"/>
<line x1="535.6" y1="889.9" x2="543.8" y2="983.6" stroke="#3a3a3a" stroke-width="2"/>
<line x1="532.4" y1="889.9" x2="524.2" y2="983.6" stroke="#3a3a3a" stroke-width="2"/>
<line x1="529.3" y1="889.4" x2="505.0" y2="980.2" stroke="#3a3a3a" stroke-width="2"/>
<line x1="526.4" y1="888.3" x2="486.7" y2="973.5" stroke="#3a3a3a" stroke-width="2"/>
<line x1="523.7" y1="886.7" x2="469.8" y2="963.7" stroke="#3a3a3a" stroke-width="2"/>
<line x1="521.3" y1="884.7" x2="454.8" y2="951.2" stroke="#3a3a3a" stroke-width="2"/>
<line x1="519.3" y1="882.3" x2="442.3" y2="936.2" stroke="#3a3a3a" stroke-width="2"/>
<line x1="517.7" y1="879.6" x2="432.5" y2="919.3" stroke="#3a3a3a" stroke-width="2"/>
<line x1="516.6" y1="876.7" x2="425.8" y2="901.0" stroke="#3a3a3a" stroke-width="2"/>
<line x1="516.1" y1="873.6" x2="422.4" y2="881.8" stroke="#3a3a3a" stroke-width="2"/>
<line x1="516.1" y1="870.4" x2="422.4" y2="862.2" stroke="#3a3a3a" stroke-width="2"/>
<line x1="516.6" y1="867.3" x2="425.8" y2="843.0" stroke="#3a3a3a" stroke-width="2"/>
<line x1="517.7" y1="864.4" x2="432.5" y2="824.7" stroke="#3a3a3a" stroke-width="2"/>
<line x1="519.3" y1="861.7" x2="442.3" y2="807.8" stroke="#3a3a3a" stroke-width="2"/>
<line x1="521.3" y1="859.3" x2="454.8" y2="792.8" stroke="#3a3a3a" stroke-width="2"/>
<line x1="523.7" y1="857.3" x2="469.8" y2="780.3" stroke="#3a3a3a" stroke-width="2"/>
<line x1="526.4" y1="855.7" x2="486.7" y2="770.5" stroke="#3a3a3a" stroke-width="2"/>
<line x1="529.3" y1="854.6" x2="505.0" y2="763.8" stroke="#3a3a3a" stroke-width="2"/>
<line x1="532.4" y1="854.1" x2="524.2" y2="760.4" stroke="#3a3a3a" stroke-width="2"/>
<line x1="535.6" y1="854.1" x2="543.8" y2="760.4" stroke="#3a3a3a" stroke-width="2"/>
<line x1="538.7" y1="854.6" x2="563.0" y2="763.8" stroke="#3a3a3a" stroke-width="2"/>
<line x1="541.6" y1="855.7" x2="581.3" y2="770.5" stroke="#3a3a3a" stroke-width="2"/>
<line x1="544.3" y1="857.3" x2="598.2" y2="780.3" stroke="#3a3a3a" stroke-width="2"/>
<line x1="546.7" y1="859.3" x2="613.2" y2="792.8" stroke="#3a3a3a" stroke-width="2"/>
<line x1="548.7" y1="861.7" x2="625.7" y2="807.8" stroke="#3a3a3a" stroke-width="2"/>
<line x1="550.3" y1="864.4" x2="635.5" y2="824.7" stroke="#3a3a3a" stroke-width="2"/>
<line x1="551.4" y1="867.3" x2="642.2" y2="843.0" stroke="#3a3a3a" stroke-width="2"/>
<line x1="551.9" y1="870.4" x2="645.6" y2="862.2" stroke="#3a3a3a" stroke-width="2"/>
<path d="M-24 -112 H24 Q33 -112 33 -103 V-52 Q33 -44 27 -39 L7 -25 Q0 -20 -7 -25 L-27 -39 Q-33 -44 -33 -52 V-103 Q-33 -112 -24 -112 Z" transform="translate(840 908) rotate(0)" fill="#323232" stroke="#0f0f0f" stroke-width="3.4" stroke-linejoin="round"/>
<path d="M-24 -112 H24 Q33 -112 33 -103 V-52 Q33 -44 27 -39 L7 -25 Q0 -20 -7 -25 L-27 -39 Q-33 -44 -33 -52 V-103 Q-33 -112 -24 -112 Z" transform="translate(840 908) rotate(90)" fill="#323232" stroke="#0f0f0f" stroke-width="3.4" stroke-linejoin="round"/>
<path d="M-24 -112 H24 Q33 -112 33 -103 V-52 Q33 -44 27 -39 L7 -25 Q0 -20 -7 -25 L-27 -39 Q-33 -44 -33 -52 V-103 Q-33 -112 -24 -112 Z" transform="translate(840 908) rotate(180)" fill="#323232" stroke="#0f0f0f" stroke-width="3.4" stroke-linejoin="round"/>
<path d="M-24 -112 H24 Q33 -112 33 -103 V-52 Q33 -44 27 -39 L7 -25 Q0 -20 -7 -25 L-27 -39 Q-33 -44 -33 -52 V-103 Q-33 -112 -24 -112 Z" transform="translate(840 908) rotate(270)" fill="#323232" stroke="#0f0f0f" stroke-width="3.4" stroke-linejoin="round"/>
<path d="M1089 733 C1125 733 1143 740 1148 775 C1155 840 1152 930 1144 972 Q1141 984 1128 984 H1022 C1008 985 1002 978 1010 968 C1030 945 1037 915 1038 860 C1039 820 1038 790 1042 765 C1046 738 1065 733 1089 733 Z" fill="#3a3a3a" stroke="#0e0e0e" stroke-width="3.6"/>
<rect x="1067" y="824" width="60" height="10" rx="5" fill="none" stroke="#444" stroke-width="1.6"/>
<rect x="1067" y="863" width="60" height="10" rx="5" fill="none" stroke="#444" stroke-width="1.6"/>
<rect x="1067" y="903" width="60" height="10" rx="5" fill="none" stroke="#444" stroke-width="1.6"/>
<path d="M1236 804 C1280 806 1294 850 1296 905 V970 Q1296 983 1283 983 H1192 Q1179 983 1179 970 V880 C1179 830 1200 803 1236 804 Z" fill="#3a3a3a" stroke="#0e0e0e" stroke-width="3.6"/>
<circle cx="1166" cy="690" r="9" fill="#8fd11f" opacity="0.35" filter="url(#b2)"/><circle cx="1166" cy="690" r="5.5" fill="#a4ee2a"/>
<g fill="none" stroke="#ffffff" stroke-opacity="0.135" stroke-width="3.2">
<path d="M532 128 V467"/><path d="M799 128 V380"/>
<path d="M1073 507 V120.5 H1460"/><path d="M1188 507 V209.5 H1465"/>
<path d="M237 484 H311"/><path d="M232 729 H725"/><path d="M270 874 H534"/>
<path d="M840 642.5 H1443"/><path d="M1107 912 V786 H1410"/><path d="M1245 912 H1375"/>
<path d="M842 839 H603 V1190"/><path d="M761 910 H709 V1190"/><path d="M842 977 V1190"/><path d="M922 910 H977 V1190"/>
</g>
<g fill="#ffffff" fill-opacity="0.19">
<circle cx="531" cy="467" r="11"/>
<circle cx="798" cy="380" r="11"/>
<circle cx="1073" cy="507" r="11"/>
<circle cx="1188" cy="507" r="11"/>
<circle cx="311" cy="484" r="11"/>
<circle cx="725" cy="729" r="11"/>
<circle cx="534" cy="873" r="11"/>
<circle cx="840" cy="642" r="11"/>
<circle cx="1107" cy="912" r="11"/>
<circle cx="1245" cy="912" r="11"/>
<circle cx="842" cy="839" r="11"/>
<circle cx="761" cy="910" r="11"/>
<circle cx="842" cy="977" r="11"/>
<circle cx="922" cy="910" r="11"/>
</g>
<text x="421" y="113" font-family="Noto Sans CJK JP, Liberation Sans, sans-serif" font-size="43.6" font-weight="500" fill="#555555" text-anchor="start">スクロール</text>
<text x="740" y="116" font-family="Noto Sans CJK JP, Liberation Sans, sans-serif" font-size="48.5" font-weight="700" fill="#696969" text-anchor="start">トップ</text>
<text x="101" y="501" font-family="Noto Sans CJK JP, Liberation Sans, sans-serif" font-size="42" font-weight="500" fill="#555555" text-anchor="start">サイド</text>
<text x="103" y="741" font-family="Noto Sans CJK JP, Liberation Sans, sans-serif" font-size="42" font-weight="500" fill="#555555" text-anchor="start">ツアー</text>
<text x="98" y="891" font-family="Noto Sans CJK JP, Liberation Sans, sans-serif" font-size="42" font-weight="500" fill="#555555" text-anchor="start">ダイアル</text>
<text x="1449" y="659" font-family="Noto Sans CJK JP, Liberation Sans, sans-serif" font-size="42" font-weight="500" fill="#555555" text-anchor="start">ノブ</text>
<text x="1413" y="800" font-family="Noto Sans CJK JP, Liberation Sans, sans-serif" font-size="42" font-weight="500" fill="#555555" text-anchor="start">トール</text>
<text x="1376" y="931" font-family="Noto Sans CJK JP, Liberation Sans, sans-serif" font-size="42" font-weight="500" fill="#555555" text-anchor="start">ショート</text>
<text x="603" y="1236" font-family="Noto Sans CJK JP, Liberation Sans, sans-serif" font-size="46" font-weight="500" fill="#555555" text-anchor="middle">上</text>
<text x="706" y="1236" font-family="Noto Sans CJK JP, Liberation Sans, sans-serif" font-size="46" font-weight="500" fill="#555555" text-anchor="middle">左</text>
<text x="840" y="1236" font-family="Noto Sans CJK JP, Liberation Sans, sans-serif" font-size="46" font-weight="500" fill="#555555" text-anchor="middle">下</text>
<text x="975" y="1236" font-family="Noto Sans CJK JP, Liberation Sans, sans-serif" font-size="46" font-weight="500" fill="#555555" text-anchor="middle">右</text>
<text x="1467" y="131" font-family="Noto Sans CJK JP, Liberation Sans, sans-serif" font-size="48.5" font-weight="500" fill="#555555" text-anchor="start" letter-spacing="6">C1</text>
<text x="1470" y="226.5" font-family="Noto Sans CJK JP, Liberation Sans, sans-serif" font-size="48.5" font-weight="500" fill="#555555" text-anchor="start" letter-spacing="6">C2</text>
</g></svg>
</body></html>
